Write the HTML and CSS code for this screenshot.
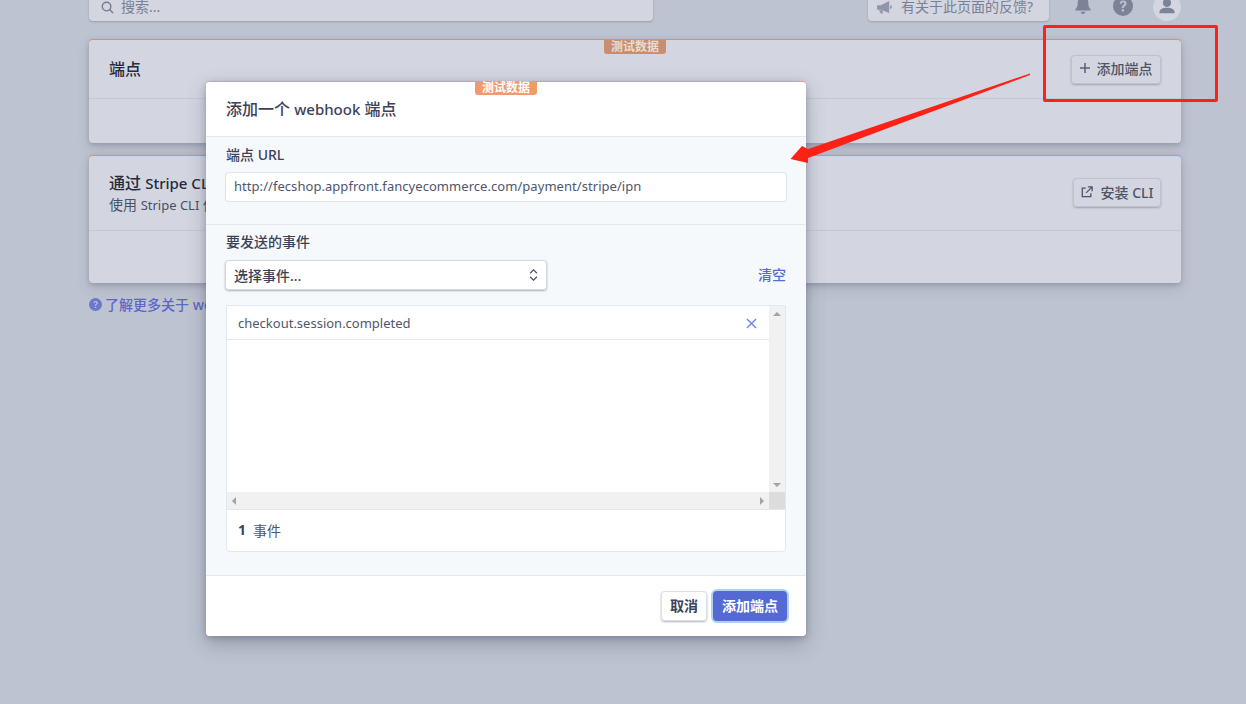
FILE: index.html
```html
<!DOCTYPE html>
<html lang="zh">
<head>
<meta charset="utf-8">
<title>Webhook</title>
<link rel="stylesheet" href="styles.css">
</head>
<body>
<div class="page">
  <div class="topbar">
    <div class="search">
      <svg class="search-icon" viewBox="0 0 14 14"><circle cx="6" cy="6" r="4.6" fill="none" stroke="currentColor" stroke-width="1.5"/><path d="M9.5 9.5 13 13" stroke="currentColor" stroke-width="1.6" fill="none"/></svg>
      <span>搜索...</span>
    </div>
    <div class="top-right">
      <div class="feedback">
        <svg class="feedback-icon" viewBox="0 0 16 14"><path d="M0 4.500h4L13 0v13L4 9.500H0zM14 4.500c1.300 0 2 1 2 2s-.7 2-2 2zM2 10h3.500l1 3.500H4z" fill="currentColor"/></svg>
        <span>有关于此页面的反馈?</span>
      </div>
      <svg class="top-icon" viewBox="0 0 18 22"><path d="M9 0c1 0 1.500.6 1.500 1.400C13.500 2 15 4.500 15 7.500c0 3.500.5 5 2.500 7v1.500H.5v-1.500c2-2 2.500-3.500 2.500-7C3 4.500 4.500 2 7.500 1.400 7.500.6 8 0 9 0zM6.500 17.500h5C11.500 19 10.500 20 9 20s-2.500-1-2.500-2.500z" fill="currentColor"/></svg>
      <svg class="top-icon help" viewBox="0 0 20 20"><circle cx="10" cy="10" r="10" fill="currentColor"/><path d="M6.800 7.800C6.800 5.800 8.200 4.600 10.200 4.600c2 0 3.300 1.200 3.300 2.900 0 2.500-2.700 2.500-2.700 4.600H8.900c0-3 2.500-3 2.500-4.600 0-.8-.5-1.300-1.300-1.300-.9 0-1.400.6-1.400 1.600zM8.800 13.300H11v2.100H8.800z" fill="#bdc3d0"/></svg>
      <div class="avatar">
        <svg viewBox="0 0 20 20"><circle cx="10" cy="6.500" r="4.500" fill="currentColor"/><path d="M1.500 18c0-4.500 3-6 8.500-6s8.500 1.500 8.500 6z" fill="currentColor"/></svg>
      </div>
    </div>
  </div>

  <section class="card">
    <span class="test-tag dim">测试数据</span>
    <header class="card-head">
      <h2 class="card-title">端点</h2>
      <button class="btn btn-dim add">
        <svg class="plus" viewBox="0 0 10 10"><path d="M5 0v10M0 5h10" stroke="currentColor" stroke-width="1.500" fill="none"/></svg>
        添加端点
      </button>
    </header>
    <div class="card-body short"></div>
  </section>

  <section class="card">
    <header class="card-head tall">
      <div>
        <h2 class="card-title">通过 <span class="latin">Stripe CLI</span> 在本地监听事件</h2>
        <p class="card-sub">使用 <span class="latin-sm">Stripe CLI</span> 传输事件到本地</p>
      </div>
      <button class="btn btn-dim install">
        <svg class="ext" viewBox="0 0 14 14"><path d="M5.500 2.500H1.500v10h10V8.500M8 1h5v5M13 1 6 8" fill="none" stroke="currentColor" stroke-width="1.500"/></svg>
        安装 CLI
      </button>
    </header>
    <div class="card-body"></div>
  </section>

  <a class="learn">
    <svg viewBox="0 0 20 20"><circle cx="10" cy="10" r="10" fill="currentColor"/><path d="M6.800 7.800C6.800 5.800 8.200 4.600 10.200 4.600c2 0 3.300 1.200 3.300 2.900 0 2.500-2.700 2.500-2.700 4.600H8.900c0-3 2.500-3 2.500-4.600 0-.8-.5-1.300-1.300-1.300-.9 0-1.400.6-1.400 1.600zM8.800 13.300H11v2.100H8.800z" fill="#bdc3d0"/></svg>
    了解更多关于 webhook 的信息
  </a>
</div>

<div class="modal">
  <span class="test-tag">测试数据</span>
  <header class="modal-head"><span>添加一个 <span class="latin">webhook</span> 端点</span></header>
  <div class="field url-field">
    <label class="label">端点 URL</label>
    <div class="input">http://fecshop.appfront.fancyecommerce.com/payment/stripe/ipn</div>
  </div>
  <div class="field events">
    <label class="label">要发送的事件</label>
    <div class="select-row">
      <div class="select">
        <span>选择事件...</span>
        <svg class="updown" viewBox="0 0 10 14"><path d="M1 5l4-4 4 4M1 9l4 4 4-4" fill="none" stroke="currentColor" stroke-width="1.500"/></svg>
      </div>
      <a class="clear">清空</a>
    </div>
    <div class="list">
      <div class="list-scroll">
        <div class="list-main">
          <div class="list-row">
            <span>checkout.session.completed</span>
            <svg class="remove" viewBox="0 0 12 12"><path d="M1 1l10 10M11 1 1 11" stroke="currentColor" stroke-width="1.500" fill="none"/></svg>
          </div>
        </div>
        <div class="vbar"><i class="arr up"></i><i class="arr down"></i></div>
        <div class="hbar"><i class="arr left"></i><i class="arr right"></i></div>
        <div class="corner"></div>
      </div>
      <div class="list-foot"><b>1</b>事件</div>
    </div>
  </div>
  <footer class="modal-foot">
    <button class="btn btn-white">取消</button>
    <button class="btn btn-primary">添加端点</button>
  </footer>
</div>

<div class="mark-box"></div>
<svg class="mark-arrow" viewBox="0 0 1246 704"><polygon points="1030,73.500 808,149 802,146 790.500,159 808,163 808,158 1030,75" fill="#ff2116"/></svg>
</body>
</html>
```
FILE: styles.css
```css
* { box-sizing: border-box; }
html, body { margin: 0; height: 100%; }
body {
  width: 1246px; height: 704px; overflow: hidden; position: relative;
  background: #bdc3d0;
  font-family: "Noto Sans", "Noto Sans CJK SC", sans-serif;
  font-size: 14px; color: #3c4257;
}
.page { padding: 0 65px 0 89px; display: flex; flex-direction: column; }
.topbar { height: 21px; display: flex; justify-content: space-between; align-items: flex-end; margin-bottom: 18px; }
.search {
  width: 564px; height: 30px; margin-top: -9px; background: #d3d6e0; border-radius: 0 0 4px 4px;
  box-shadow: 0 1px 2px rgba(60,66,87,.3); display: flex; align-items: center; gap: 7px;
  padding: 2px 0 0 12px; color: #7a8093; font-size: 14px; line-height: 14px;
}
.search-icon { width: 13px; height: 13px; color: #747b90; }
.top-right { display: flex; align-items: center; height: 21px; }
.feedback {
  width: 181px; height: 30px; margin: -9px 0 0 0; padding: 2px 0 0 9px; background: #d3d6e0;
  border-radius: 0 0 4px 4px; box-shadow: 0 1px 2px rgba(60,66,87,.25);
  display: flex; align-items: center; gap: 9px; color: #7a8093; font-size: 14px; line-height: 14px;
}
.feedback-icon { width: 15px; height: 13px; color: #8f96a8; flex: none; }
.top-icon { width: 16px; height: 20px; margin: -9px 0 0 26px; color: #7c8397; flex: none; }
.top-icon.help { width: 20px; height: 20px; margin: -10px 0 0 22px; }
.avatar {
  width: 28px; height: 28px; margin: -7px 0 0 20px; border-radius: 50%; background: #d3d6e0; color: #7c8397;
  display: flex; align-items: center; justify-content: center; flex: none;
}
.avatar svg { width: 18px; height: 18px; margin-top: -2px; }
.card {
  position: relative; background: #d3d6e0; border-radius: 4px; border-top: 1px solid #cf9478;
  box-shadow: 0 2px 5px rgba(60,66,87,.25), 0 6px 14px rgba(60,66,87,.12); margin-bottom: 12px;
}
.card-head {
  display: flex; justify-content: space-between; align-items: center; height: 59px; padding: 0 20px;
  border-bottom: 1px solid #c3c8d6;
}
.card-head.tall { height: 75px; align-items: flex-start; padding-top: 16px; }
.card-title { margin: 0; font-size: 16px; line-height: 22px; font-weight: 500; color: #252a3d; }
.card-sub { margin: 1px 0 0; font-size: 14px; line-height: 19px; color: #4a5065; }
.latin { font-size: 15px; }
.latin-sm { font-size: 13px; }
.card-body { height: 52px; }
.card-body.short { height: 44px; }
.test-tag {
  position: absolute; left: 269px; top: -1px; width: 62px; height: 14px; background: #f29a6b; color: #fff;
  border-radius: 0 0 3px 3px; font-size: 12px; line-height: 14px; font-weight: 700; text-align: center;
}
.test-tag.dim { left: 515px; top: 0; background: #c98d70; color: #e6dcd6; }
.btn {
  font-family: inherit; font-size: 14px; font-weight: 500; height: 28px; border: 0; border-radius: 4px;
  display: inline-flex; align-items: center; justify-content: center; padding: 0 0 2px;
}
.btn-dim {
  height: 29px; background: #d3d6e0; color: #4d5368; flex: none;
  box-shadow: inset 0 0 0 1px #bfc3d0, 0 1px 2px rgba(60,66,87,.35);
}
.add { width: 90px; gap: 7px; }
.plus { width: 10px; height: 10px; color: #5a6074; flex: none; }
.install { width: 88px; margin-top: 6px; gap: 8px; }
.ext { width: 12px; height: 12px; flex: none; }
.learn { display: flex; align-items: center; gap: 3px; height: 18px; margin-top: 0; color: #5d68c4; font-size: 14px; font-weight: 500; }
.learn svg { width: 13px; height: 13px; color: #6a78cd; flex: none; }
.modal {
  position: absolute; left: 206px; top: 81px; width: 600px; height: 555px; background: #f6f9fc;
  border-radius: 4px; border-top: 1px solid #f29a6b; box-shadow: 0 8px 20px rgba(60,66,87,.3), 0 2px 6px rgba(60,66,87,.3);
  display: flex; flex-direction: column;
}
.modal-head {
  height: 55px; flex: none; background: #fff; border-bottom: 1px solid #e3e8ee; border-radius: 4px 4px 0 0;
  padding: 0 20px 1px; display: flex; align-items: center; font-size: 16px; line-height: 22px; font-weight: 500; color: #3c4257;
}
.field { padding: 0 19px; }
.url-field { height: 88px; padding-top: 9px; border-bottom: 1px solid #e3e8ee; flex: none; }
.label { display: block; font-size: 14px; line-height: 18px; font-weight: 500; color: #3c4257; margin: 0 0 8px 1px; }
.input {
  height: 30px; background: #fff; border-radius: 4px; box-shadow: inset 0 0 0 1px #dfe3ea;
  padding: 0 9px; line-height: 28px; font-size: 13px; letter-spacing: .05px; color: #4f566b; width: 562px;
}
.events { flex: 1; padding-top: 8px; }
.events .label { margin-bottom: 9px; }
.select-row { display: flex; justify-content: space-between; align-items: center; height: 30px; padding-right: 1px; }
.select {
  width: 322px; height: 30px; background: #fff; border-radius: 4px; display: flex; justify-content: space-between;
  align-items: center; padding: 0 9px 1px; font-weight: 500; color: #3c4257;
  box-shadow: inset 0 0 0 1px #d5d8e0, 0 1px 2px rgba(60,66,87,.4);
}
.updown { width: 9px; height: 12px; color: #4f566b; }
.clear { color: #556cd6; font-weight: 500; font-size: 14px; line-height: 28px; }
.list { margin: 15px 0 0 1px; width: 560px; height: 247px; background: #fff; border: 1px solid #e3e8ee; border-radius: 0 0 4px 4px; display: flex; flex-direction: column; }
.list-scroll { display: grid; grid-template-columns: 542px 16px; grid-template-rows: 186px 17px; flex: none; }
.list-main { background: #fff; }
.list-row {
  height: 34px; padding: 0 11px; border-bottom: 1px solid #e3e8ee; display: flex; justify-content: space-between;
  align-items: center; font-size: 13px; color: #4f566b;
}
.remove { width: 11px; height: 11px; color: #6b87ee; margin: 1px 1px 0 0; }
.vbar { background: #f1f1f1; display: flex; flex-direction: column; justify-content: space-between; align-items: center; padding: 6px 0 5px; }
.hbar { background: #f1f1f1; display: flex; justify-content: space-between; align-items: center; padding: 0 5px; }
.corner { background: #dcdcdc; }
.arr { display: block; width: 0; height: 0; border: 4px solid transparent; }
.arr.up { border-top: 0; border-bottom: 4px solid #a3a3a3; }
.arr.down { border-bottom: 0; border-top: 4px solid #a3a3a3; }
.arr.left { border-left: 0; border-right: 4px solid #a3a3a3; }
.arr.right { border-right: 0; border-left: 4px solid #a3a3a3; }
.list-foot { flex: 1; border-top: 1px solid #e3e8ee; padding: 0 0 2px 11px; display: flex; align-items: center; gap: 7px; font-size: 14px; color: #4f566b; }
.list-foot b { color: #3c4257; }
.modal-foot {
  height: 61px; flex: none; background: #fff; border-top: 1px solid #e3e8ee; border-radius: 0 0 4px 4px;
  display: flex; justify-content: flex-end; align-items: flex-start; gap: 6px; padding: 15px 19px 0 0;
}
.modal-foot .btn { height: 30px; }
.btn-white { width: 46px; background: #fff; color: #3c4257; box-shadow: inset 0 0 0 1px #dcdfe6, 0 1px 2px rgba(60,66,87,.4); font-weight: 700; }
.btn-primary { width: 74px; background: #5469d4; color: #fff; box-shadow: 0 0 0 2px #aed3ee; font-weight: 700; }
.mark-box { position: absolute; left: 1043px; top: 25px; width: 175px; height: 77px; border: 3px solid #ff2116; border-radius: 2px; }
.mark-arrow { position: absolute; left: 0; top: 0; width: 1246px; height: 704px; pointer-events: none; }
```
